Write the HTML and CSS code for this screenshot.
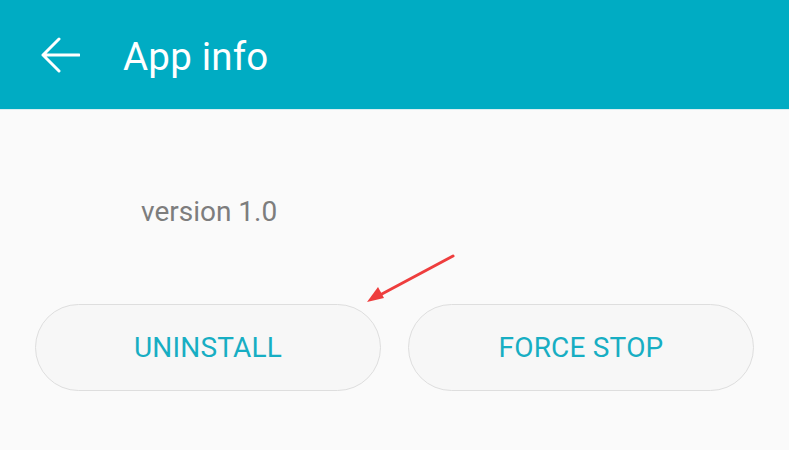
FILE: index.html
```html
<!DOCTYPE html>
<html>
<head>
<meta charset="utf-8">
<link rel="stylesheet" href="styles.css">
</head>
<body>
<div class="screen">
  <header class="appbar">
    <svg class="back" width="40" height="36" viewBox="0 0 40 36">
      <path d="M39 18 H3 M19 2 L3 18 L19 34" fill="none" stroke="#fff" stroke-width="3" stroke-linecap="round" stroke-linejoin="round"/>
    </svg>
    <h1 class="title">App info</h1>
  </header>
  <main class="content">
    <div class="version">version 1.0</div>
    <div class="actions">
      <button class="pill">UNINSTALL</button>
      <button class="pill">FORCE STOP</button>
    </div>
  </main>
  <svg class="annot" width="789" height="450" viewBox="0 0 789 450">
    <line x1="453" y1="256" x2="380" y2="295" stroke="#ee3d3d" stroke-width="3" stroke-linecap="round"/>
    <polygon points="367,302 378,287 384,298" fill="#ee3d3d"/>
  </svg>
</div>
</body>
</html>
```
FILE: styles.css
```css
html, body {
  margin: 0;
  padding: 0;
}
body {
  background: #fafafa;
  font-family: Roboto, "Noto Sans", "Liberation Sans", sans-serif;
}
.screen {
  position: relative;
  width: 789px;
  height: 450px;
  overflow: hidden;
  background: #fafafa;
}
.appbar {
  height: 109px;
  background: #00acc3;
  border-bottom: 1px solid #d9eef1;
  display: flex;
  align-items: center;
  padding-left: 40px;
  box-sizing: content-box;
}
.back {
  display: block;
  margin-top: 1px;
}
.title {
  margin: 5px 0 0 43px;
  color: #fff;
  font-weight: 400;
  font-size: 38.5px;
  line-height: 1;
  letter-spacing: 0.2px;
}
.content {
  display: flex;
  flex-direction: column;
}
.version {
  margin: 84px 0 0 141px;
  font-size: 28px;
  line-height: 36px;
  color: #7d7d7d;
}
.actions {
  display: flex;
  gap: 27px;
  padding: 0 35px;
  margin-top: 74px;
}
.pill {
  flex: 1;
  height: 87px;
  border-radius: 44px;
  border: 1.5px solid #dedede;
  background: #f7f7f7;
  color: #17aec3;
  font-family: Roboto, "Noto Sans", "Liberation Sans", sans-serif;
  font-size: 28px;
  letter-spacing: 0.2px;
  padding: 0;
}
.annot {
  position: absolute;
  left: 0;
  top: 0;
  pointer-events: none;
}
```
